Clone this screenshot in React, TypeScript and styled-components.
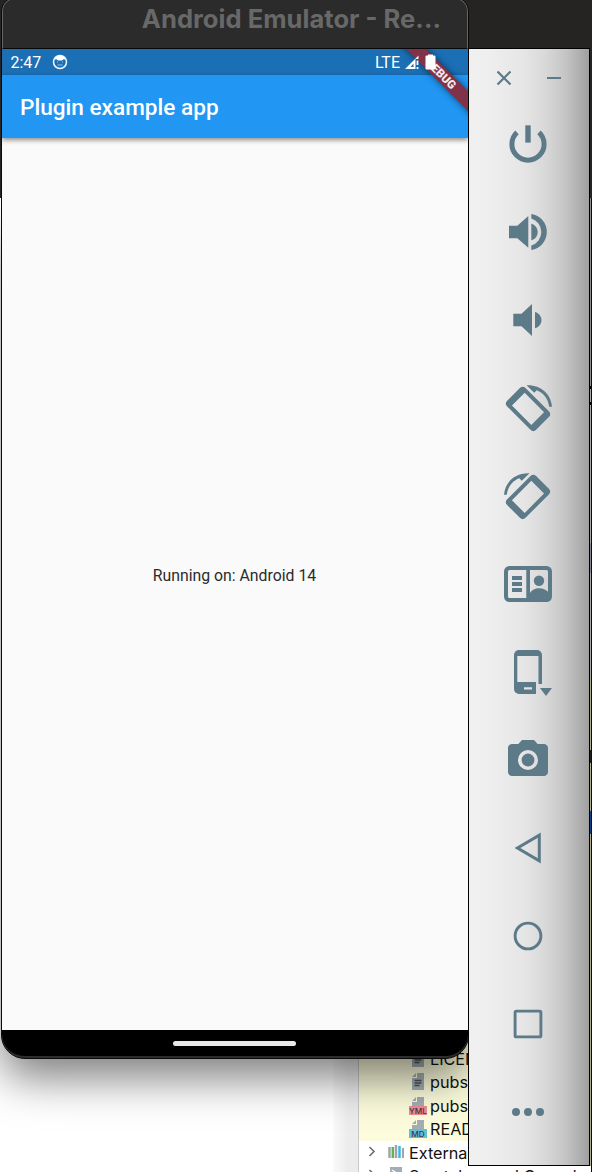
import React from "react";
import styled, { createGlobalStyle } from "styled-components";

const GlobalStyle = createGlobalStyle`
  * { box-sizing: border-box; }
  body { margin: 0; }
`;

const INK = "#5d7a88";

const Desktop = styled.main`
  position: relative;
  width: 592px;
  height: 1172px;
  overflow: hidden;
  display: flex;
  flex-direction: column;
  background: #fff;
`;

const DarkWindow = styled.div`
  flex: none;
  height: 198px;
  background: #252422;
`;

const Ide = styled.div`
  flex: 1;
  display: flex;
  border-right: 1px solid #0c0c0c;
`;

const Editor = styled.div`
  width: 333px;
  background: #fff;
`;

const Gutter = styled.div`
  width: 26px;
  background: linear-gradient(90deg, #fafafa, #ececec 60%);
  border-right: 1px solid #c9c9c9;
`;

const Tree = styled.div`
  flex: 1;
  min-width: 0;
  display: flex;
  flex-direction: column;
  justify-content: flex-end;
  overflow: hidden;
  margin-bottom: -16px;
  background: #fff;
`;

const FileRows = styled.div`
  flex: 1;
  display: flex;
  flex-direction: column;
  justify-content: flex-end;
  background: #fcfcdc;
`;

const Row = styled.div<{ $root?: boolean }>`
  flex: none;
  display: flex;
  align-items: center;
  height: 23.5px;
  padding-left: ${(p) => (p.$root ? 9 : 50)}px;
  gap: ${(p) => (p.$root ? 4 : 3)}px;
  font: 16.2px Inter, "Liberation Sans", sans-serif;
  white-space: nowrap;
  color: #111;

  svg { flex: none; }
`;

const Phone = styled.section`
  position: absolute;
  left: 1px;
  top: -3px;
  width: 468px;
  height: 1062px;
  display: flex;
  flex-direction: column;
  overflow: hidden;
  border: 1px solid #0a0a0a;
  border-radius: 14px 14px 24px 24px;
  background: #2d2d2d;
`;

const PhoneShadow = styled.div`
  position: absolute;
  left: 2px;
  top: 210px;
  width: 466px;
  height: 846px;
  border-radius: 24px;
  box-shadow: 0 22px 44px rgba(0, 0, 0, 0.5);
`;

const TitleBar = styled.header`
  flex: none;
  height: 51px;
  padding: 0 26px 10px 0;
  display: flex;
  align-items: center;
  justify-content: flex-end;
  background: #2b2b2b;
  border: 1px solid #656565;
  border-bottom: 1px solid #080808;
  border-radius: 13px 13px 0 0;
  color: #686868;
  font: 700 25.6px Inter, "Liberation Sans", sans-serif;
  white-space: nowrap;
`;

const Screen = styled.div`
  position: relative;
  flex: none;
  height: 981px;
  display: flex;
  flex-direction: column;
  overflow: hidden;
  background: #fafafa;
  font-family: Roboto, sans-serif;
`;

const StatusBar = styled.div`
  flex: none;
  height: 26px;
  padding: 0 32px 0 8.5px;
  display: flex;
  align-items: center;
  background: #1b6fb5;
  color: #fff;
  font-size: 16px;
`;

const StatusIcons = styled.div`
  position: relative;
  z-index: 2;
  margin-left: auto;
  display: flex;
  align-items: center;
  gap: 5px;
`;

const AppBar = styled.div`
  flex: none;
  height: 63px;
  padding: 1px 18px 0;
  display: flex;
  align-items: center;
  background: #2196f3;
  box-shadow: 0 2px 5px rgba(0, 0, 0, 0.45);
  color: #fff;
  font-size: 22.6px;
  font-weight: 500;
`;

const Content = styled.div`
  flex: 1;
  padding: 0 1px 18px 0;
  display: flex;
  align-items: center;
  justify-content: center;
  color: #2b2b2b;
  font-size: 15.8px;
`;

const DebugRibbon = styled.div`
  position: absolute;
  z-index: 1;
  left: 378.5px;
  top: 18px;
  width: 120px;
  height: 14px;
  display: flex;
  align-items: center;
  justify-content: center;
  transform: rotate(45deg);
  background: #803348;
  box-shadow: 0 0 7px rgba(0, 0, 0, 0.55);
  color: #f3e9ec;
  font-size: 11.6px;
  font-weight: 900;
`;

const NavBar = styled.div`
  flex: none;
  height: 26px;
  padding-right: 2px;
  display: flex;
  align-items: center;
  justify-content: center;
  background: #000;
  border-radius: 0 0 22px 22px;
`;

const HomePill = styled.div`
  width: 123px;
  height: 5px;
  border-radius: 3px;
  background: #e8e8e8;
`;

const Toolbar = styled.aside`
  position: absolute;
  left: 468px;
  top: 48px;
  width: 122px;
  height: 1118px;
  display: flex;
  flex-direction: column;
  border: 1px solid #000;
  background: linear-gradient(90deg, #f0f0f0 0%, #eeeeee 18%, #e6e6e6 45%, #d8d8d8 64%, #c4c4c4 81%, #a0a0a0 100%);
`;

const WindowControls = styled.div`
  flex: none;
  height: 51px;
  padding: 7px 28px 0 27px;
  display: flex;
  align-items: center;
  justify-content: space-between;
`;

const ToolButton = styled.button`
  flex: none;
  height: 88px;
  padding: 0 2px 0 0;
  border: 0;
  background: none;
  display: flex;
  align-items: center;
  justify-content: center;
`;

const EdgeSliver = styled.div`
  position: absolute;
  left: 590px;
  top: 198px;
  width: 1px;
  height: 968px;
  background: linear-gradient(#8e8e8e 0 188px, #000 188px 191px, #a8a8a8 191px 204px, #000 204px 207px, #a8a8a8 207px 345px, #858592 345px 375px, #a8a8a8 375px 480px, #b2b28e 480px 552px, #222 552px 565px, #b2b28e 565px 613px, #123f86 613px 636px, #b2b28e 636px);
`;

const Tool = ({ label, children }: { label: string; children: React.ReactNode }) => (
  <ToolButton aria-label={label}>
    <svg width="48" height="48" viewBox="0 0 48 48" fill={INK} overflow="visible">
      {children}
    </svg>
  </ToolButton>
);

const TiltedPhone = () => (
  <>
    <path
      transform="rotate(45 24 24.9)"
      fillRule="evenodd"
      d="M7.5 11.9H40.5a4 4 0 0 1 4 4V33.9a4 4 0 0 1-4 4H7.5a4 4 0 0 1-4-4V15.9a4 4 0 0 1 4-4ZM10.3 15.9V33.9H37.7V15.9Z"
    />
    <path d="M22.5 1.3C36 .5 47 9.5 48 22.7H45.2C44.3 15 39.5 8.8 32.8 6.2L30.2 8.8Z" />
  </>
);

const DocIcon = ({ tag, color }: { tag?: string; color?: string }) => (
  <svg width="18" height="20" viewBox="0 0 18 20">
    <path d="M8 1h7v17H3V6h5Z" fill="#a4adb3" />
    <path d="M7 1v4H3Z" fill="#a4adb3" />
    {tag ? (
      <>
        <rect x="0" y="10" width="18" height="9" fill={color} />
        <text x="9" y="17.6" textAnchor="middle" fontFamily="Inter, sans-serif" fontSize="8.2" fontWeight="500" fill="#46343b">
          {tag}
        </text>
      </>
    ) : (
      <path d="M5.5 8.5h7M5.5 11h7M5.5 13.5h5" stroke="#4b5054" strokeWidth="1.3" />
    )}
  </svg>
);

const Chevron = () => (
  <svg width="16" height="16" viewBox="0 0 16 16">
    <path d="M1.5 2 6 6.5 1.5 11" fill="none" stroke="#6e6e6e" strokeWidth="1.6" />
  </svg>
);

export default function App() {
  return (
    <Desktop>
      <GlobalStyle />
      <DarkWindow />
      <Ide>
        <Editor />
        <Gutter />
        <Tree>
          <FileRows>
            <Row><DocIcon />LICENSE</Row>
            <Row><DocIcon />pubspec.lock</Row>
            <Row><DocIcon tag="YML" color="#ee8c97" />pubspec.yaml</Row>
            <Row><DocIcon tag="MD" color="#5fc0da" />README.md</Row>
          </FileRows>
          <Row $root>
            <Chevron />
            <svg width="17" height="18" viewBox="0 0 17 18">
              <path d="M1.5 3v11M8 1v13" stroke="#9da6ac" strokeWidth="2.5" />
              <path d="M4.800 3v11" stroke="#62b543" strokeWidth="2.5" />
              <path d="M11.5 2v12" stroke="#40b6e0" strokeWidth="2.5" />
              <path d="M15 4v10" stroke="#9da6ac" strokeWidth="2" />
            </svg>
            External Libraries
          </Row>
          <Row $root>
            <Chevron />
            <svg width="17" height="20" viewBox="0 0 17 20">
              <path d="M2 1h12v14H2Z" fill="#a4adb3" />
              <path d="M4 4l3 2-3 2" fill="none" stroke="#fff" strokeWidth="1.4" />
            </svg>
            Scratches and Consoles
          </Row>
        </Tree>
      </Ide>

      <PhoneShadow />
      <Phone>
        <TitleBar>Android Emulator - Re...</TitleBar>
        <Screen>
          <StatusBar>
            2:47
            <svg width="16" height="16" viewBox="0 0 16 16" style={{ marginLeft: 11 }}>
              <circle cx="8" cy="8" r="6.5" fill="none" stroke="#f2f7fb" strokeWidth="1.5" />
              <path d="M2.500 5.500C4 .3 12 .3 13.500 5.500L11.500 5.200 10 6.500H6L4.500 5.200Z" fill="#fff" />
              <path d="M5 8h1M10 8h1M5.500 11h5" stroke="#9cc3e3" />
            </svg>
            <StatusIcons>
              LTE
              <svg width="15" height="15" viewBox="0 0 15 15">
                <path fillRule="evenodd" d="M0 14 13.500 .5V4H10.500V14ZM5.500 12H8.500V8.500Z" fill="#fff" />
                <path d="M12.500 5.500V10M12.500 12v2" stroke="#fff" strokeWidth="1.8" />
              </svg>
              <svg width="11" height="16" viewBox="0 0 11 16">
                <path d="M3 .5h5V1.500h1.500a1 1 0 0 1 1 1V14.500a1 1 0 0 1-1 1h-8a1 1 0 0 1-1-1V2.500a1 1 0 0 1 1-1H3Z" fill="#fff" />
              </svg>
            </StatusIcons>
          </StatusBar>
          <AppBar>Plugin example app</AppBar>
          <Content>Running on: Android 14</Content>
          <DebugRibbon>DEBUG</DebugRibbon>
        </Screen>
        <NavBar>
          <HomePill />
        </NavBar>
      </Phone>

      <Toolbar>
        <WindowControls>
          <svg width="16" height="16" viewBox="0 0 16 16">
            <path d="M1.5 1.5 14.5 14.5M14.5 1.5 1.5 14.5" stroke={INK} strokeWidth="2.2" />
          </svg>
          <svg width="14" height="16" viewBox="0 0 14 16">
            <path d="M0 8h14" stroke={INK} strokeWidth="2" />
          </svg>
        </WindowControls>
        <Tool label="Power">
          <path d="M21.3 5.3h5.4V22.6h-5.4Z" />
          <path d="M13 12.3A16.1 16.1 0 1 0 35 12.3" fill="none" stroke={INK} strokeWidth="5" />
        </Tool>
        <Tool label="Volume up">
          <path d="M5 17.7H13.3L24.3 8V39.7L13.3 30.3H5Z" />
          <path d="M27.3 15.7C35.8 18 35.8 30 27.3 32.3Z" />
          <path d="M27.3 6A18.2 18.2 0 0 1 27.3 42V37.5A14.1 14.1 0 0 0 27.3 10.5Z" />
        </Tool>
        <Tool label="Volume down">
          <path d="M9.3 17.7H17.5L28 8V40L17.5 30.3H9.3Z" />
          <path d="M31 16C39.600 18.500 39.600 29.800 31 32.300Z" />
        </Tool>
        <Tool label="Rotate left">
          <TiltedPhone />
        </Tool>
        <Tool label="Rotate right">
          <g transform="matrix(-1 0 0 1 48 0)">
            <TiltedPhone />
          </g>
        </Tool>
        <Tool label="Display mode">
          <rect x="2" y="8" width="44" height="32" rx="3.5" fill="none" stroke={INK} strokeWidth="4" />
          <path d="M22.3 8H26V40H22.3ZM8 16H18V20H8ZM8 22H18V26H8ZM8 28H18V32H8Z" />
          <circle cx="35" cy="20.7" r="5.2" />
          <path d="M26 33C29 26.5 41 26.5 45 33V41H26Z" />
        </Tool>
        <Tool label="Fold device">
          <path fillRule="evenodd" d="M15 2H33a5 5 0 0 1 5 5V36H34.5V8H13.3V34H32V46H15a5 5 0 0 1-5-5V7a5 5 0 0 1 5-5ZM20 39.2V41.500H28V39.200Z" />
          <path d="M36 40H48L42 48Z" />
        </Tool>
        <Tool label="Screenshot">
          <path
            fillRule="evenodd"
            d="M18 4 14.3 8H8C5.8 8 4 9.8 4 12V36C4 38.2 5.8 40 8 40H40C42.2 40 44 38.2 44 36V12C44 9.8 42.2 8 40 8H33.7L30 4ZM24 14A10 10 0 1 1 24 34A10 10 0 1 1 24 14Z"
          />
          <circle cx="24" cy="24" r="6.4" />
        </Tool>
        <Tool label="Back">
          <path d="M35.3 11.2V36.8L13.5 24Z" fill="none" stroke={INK} strokeWidth="3" />
        </Tool>
        <Tool label="Home">
          <circle cx="24" cy="24" r="12.9" fill="none" stroke={INK} strokeWidth="2.9" />
        </Tool>
        <Tool label="Overview">
          <rect x="11.1" y="11.1" width="25.8" height="25.8" rx="1.2" fill="none" stroke={INK} strokeWidth="2.9" />
        </Tool>
        <Tool label="More">
          <circle cx="12" cy="24" r="4" />
          <circle cx="24" cy="24" r="4" />
          <circle cx="36" cy="24" r="4" />
        </Tool>
      </Toolbar>
      <EdgeSliver />
    </Desktop>
  );
}
